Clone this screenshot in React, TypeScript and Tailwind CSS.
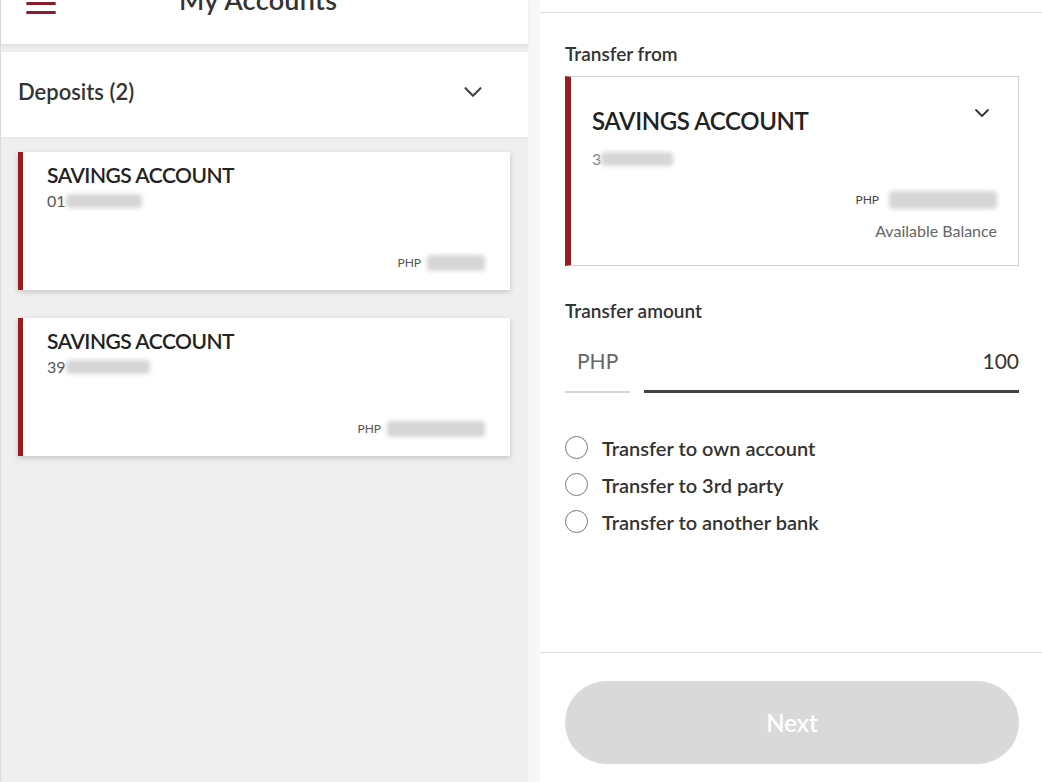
import { ChevronDown } from "lucide-react";

const font = { fontFamily: "Lato, 'Noto Sans', sans-serif" };

function Blur({ w, h = 14 }: { w: number; h?: number }) {
  return (
    <span
      className="inline-block bg-[#d6d6d6] blur-[2px] rounded-sm"
      style={{ width: w, height: h }}
    />
  );
}

function AccountCard({ prefix, blurW, amountW }: { prefix: string; blurW: number; amountW: number }) {
  return (
    <div className="ml-[17px] w-[492px] h-[138px] bg-white border-l-[5px] border-[#9b1c1f] shadow-[0_2px_6px_rgba(0,0,0,0.18)] flex flex-col pl-[24px] pr-[25px]">
      <div className="pt-[10px] text-[21px] font-semibold text-[#222] leading-[26px] tracking-[-0.5px]">
        SAVINGS ACCOUNT
      </div>
      <div className="flex items-center text-[16px] text-[#555] leading-[22px] mt-[2px]">
        {prefix}
        <Blur w={blurW} h={14} />
      </div>
      <div className="mt-auto mb-[18px] flex items-center justify-end gap-[6px]">
        <span className="text-[12px] text-[#555]">PHP</span>
        <Blur w={amountW} h={16} />
      </div>
    </div>
  );
}

export default function App() {
  return (
    <div className="w-[1042px] h-[782px] flex overflow-hidden bg-white" style={font}>
      {/* Left: My Accounts */}
      <div className="w-[528px] h-full bg-[#efefef] border-l border-[#dcdcdc] flex flex-col">
        <div className="h-[44px] bg-white shadow-[0_2px_4px_rgba(0,0,0,0.08)] relative overflow-hidden">
          <div className="absolute left-[25px] top-[-7px] flex flex-col gap-[6px]">
            <span className="block w-[30px] h-[3px] bg-[#8c1d2c] rounded" />
            <span className="block w-[30px] h-[3px] bg-[#8c1d2c] rounded" />
            <span className="block w-[30px] h-[3px] bg-[#8c1d2c] rounded" />
          </div>
          <div className="absolute left-[178px] top-[-16px] text-[27px] font-semibold text-[#333] leading-[32px] tracking-[0.3px]">
            My Accounts
          </div>
        </div>
        <div className="h-[8px]" />
        <div className="h-[85px] bg-white flex items-center justify-between pl-[17px] pr-[40px] pb-[6px] shadow-[0_1px_3px_rgba(0,0,0,0.06)]">
          <span className="text-[22px] font-semibold text-[#333]">Deposits (2)</span>
          <ChevronDown className="w-[30px] h-[30px] text-[#444]" strokeWidth={1.7} />
        </div>
        <div className="mt-[15px]">
          <AccountCard prefix="01" blurW={76} amountW={58} />
        </div>
        <div className="mt-[28px]">
          <AccountCard prefix="39" blurW={84} amountW={98} />
        </div>
      </div>

      <div className="w-[12px] h-full bg-[#f7f7f7]" />

      {/* Right: Transfer */}
      <div className="flex-1 h-full bg-white flex flex-col">
        <div className="h-[13px] border-b border-[#dedede]" />
        <div className="px-[25px] pr-[23px] flex flex-col">
          <div className="mt-[29px] text-[19px] font-semibold text-[#333] leading-[24px]">Transfer from</div>
          <div className="mt-[10px] h-[190px] border border-[#cfcfcf] border-l-[6px] border-l-[#9b1c1f] flex flex-col pl-[21px] pr-[21px] relative">
            <ChevronDown className="absolute right-[24px] top-[24px] w-[24px] h-[24px] text-[#333]" strokeWidth={1.8} />
            <div className="mt-[28px] text-[24px] font-semibold text-[#222] leading-[32px] tracking-[-0.4px]">SAVINGS ACCOUNT</div>
            <div className="mt-[10px] flex items-center text-[16px] text-[#888]">
              3
              <Blur w={72} h={14} />
            </div>
            <div className="mt-[20px] flex items-center justify-end gap-[10px]">
              <span className="text-[12px] text-[#444]">PHP</span>
              <Blur w={108} h={18} />
            </div>
            <div className="mt-[10px] text-right text-[16px] text-[#666]">Available Balance</div>
          </div>

          <div className="mt-[33px] text-[19px] font-semibold text-[#333] leading-[24px]">Transfer amount</div>
          <div className="mt-[26px] flex items-end gap-[14px]">
            <div className="w-[65px] h-[44px] border-b-2 border-[#d4d4d4] pl-[12px] text-[21px] text-[#666] leading-[24px]">
              PHP
            </div>
            <div className="flex-1 h-[44px] border-b-[3px] border-[#444] text-right text-[21px] text-[#333] leading-[24px]">
              100
            </div>
          </div>

          <div className="mt-[43px] flex flex-col gap-[14px]">
            {["Transfer to own account", "Transfer to 3rd party", "Transfer to another bank"].map((t) => (
              <label key={t} className="flex items-center gap-[14px] h-[23px]">
                <span className="w-[23px] h-[23px] rounded-full border-[1.5px] border-[#777]" />
                <span className="text-[20px] font-semibold text-[#333]">{t}</span>
              </label>
            ))}
          </div>
        </div>

        <div className="mt-auto border-t border-[#dedede] h-[130px] px-[25px] pr-[23px] pt-[28px]">
          <button className="w-full h-[83px] rounded-full bg-[#d9d9d9] text-white text-[24px] font-semibold">
            Next
          </button>
        </div>
      </div>
    </div>
  );
}
